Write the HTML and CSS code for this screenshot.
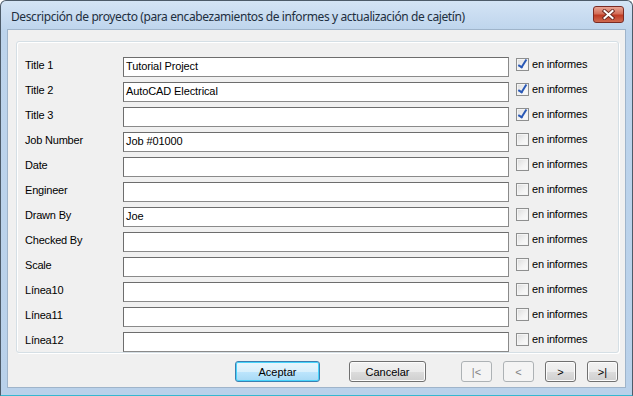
FILE: index.html
```
<html>

<head>
<meta charset="UTF-8">
<title>Descripción de proyecto</title>

<link rel="stylesheet" href="styles.css">

</head>

<body>

<div class="window">

    <div class="titlebar">
        <div class="caption">Descripción de proyecto (para encabezamientos de informes y actualización de cajetín)</div>
        <div class="close">
            <svg width="15" height="11" viewBox="0 0 15 11">
                <path d="M3.5 2 L11.5 9 M11.5 2 L3.5 9" stroke="#6a2a22" stroke-width="3.8" stroke-linecap="square"/>
                <path d="M3.5 2 L11.5 9 M11.5 2 L3.5 9" stroke="#ffffff" stroke-width="2" stroke-linecap="square"/>
            </svg>
        </div>
    </div>

    <div class="client">

        <div class="group">

            <!-- 1 -->
            <div class="label">Title 1</div>
            <div class="textbox">Tutorial Project</div>
            <div class="check"><span class="box checked"></span>en informes</div>

            <!-- 2 -->
            <div class="label">Title 2</div>
            <div class="textbox">AutoCAD Electrical</div>
            <div class="check"><span class="box checked"></span>en informes</div>

            <!-- 3 -->
            <div class="label">Title 3</div>
            <div class="textbox"></div>
            <div class="check"><span class="box checked"></span>en informes</div>

            <!-- 4 -->
            <div class="label">Job Number</div>
            <div class="textbox">Job #01000</div>
            <div class="check"><span class="box"></span>en informes</div>

            <!-- 5 -->
            <div class="label">Date</div>
            <div class="textbox"></div>
            <div class="check"><span class="box"></span>en informes</div>

            <!-- 6 -->
            <div class="label">Engineer</div>
            <div class="textbox"></div>
            <div class="check"><span class="box"></span>en informes</div>

            <!-- 7 -->
            <div class="label">Drawn By</div>
            <div class="textbox">Joe</div>
            <div class="check"><span class="box"></span>en informes</div>

            <!-- 8 -->
            <div class="label">Checked By</div>
            <div class="textbox"></div>
            <div class="check"><span class="box"></span>en informes</div>

            <!-- 9 -->
            <div class="label">Scale</div>
            <div class="textbox"></div>
            <div class="check"><span class="box"></span>en informes</div>

            <!-- 10 -->
            <div class="label">Línea10</div>
            <div class="textbox"></div>
            <div class="check"><span class="box"></span>en informes</div>

            <!-- 11 -->
            <div class="label">Línea11</div>
            <div class="textbox"></div>
            <div class="check"><span class="box"></span>en informes</div>

            <!-- 12 -->
            <div class="label">Línea12</div>
            <div class="textbox"></div>
            <div class="check"><span class="box"></span>en informes</div>

        </div>

        <div class="buttons">
            <div class="button default ok">Aceptar</div>
            <div class="button cancel">Cancelar</div>
            <div class="nav">
                <div class="button small disabled">|&lt;</div>
                <div class="button small disabled">&lt;</div>
                <div class="button small">&gt;</div>
                <div class="button small">&gt;|</div>
            </div>
        </div>

    </div>

</div>

</body>
</html>
```

FILE: styles.css
```
body {
    margin: 0;
    background: #ffffff;
}

.window {
    width: 633px;
    height: 396px;
    box-sizing: border-box;
    display: flex;
    flex-direction: column;
    border: 1px solid #4d5b69;
    border-bottom-color: #35b8d0;
    border-radius: 6px 6px 0 0;
    background: linear-gradient(#d4e4f5, #bdd4ec 30px, #b9d1ea);
    font-family: "Liberation Sans", Arial, sans-serif;
    font-size: 11px;
    color: #000;
}

.titlebar {
    height: 28px;
    display: flex;
    align-items: center;
    padding-left: 10px;
    padding-right: 8px;
}

.caption {
    flex: 1;
    font-family: "Noto Sans", sans-serif;
    font-size: 12px;
    letter-spacing: -0.4px;
    color: #1e2f40;
    margin-top: 2px;
}

.close {
    width: 31px;
    height: 17px;
    box-sizing: border-box;
    margin-top: -2px;
    border: 1px solid #7a2b24;
    border-radius: 3px;
    background: linear-gradient(#e8a493, #d36e59 45%, #bf3b24 55%, #cf6a50);
    display: flex;
    align-items: center;
    justify-content: center;
}

.client {
    flex: 1;
    margin: 0 6px 7px 6px;
    border: 1px solid #9fb4ca;
    background: #f0f0f0;
    display: flex;
    flex-direction: column;
}

.group {
    margin: 11px 6px 0 8px;
    padding: 15px 0 0 8px;
    border: 1px solid #d5dfe5;
    border-radius: 3px;
    box-shadow: inset 1px 1px 0 #ffffff, 1px 1px 0 #ffffff;
    display: grid;
    grid-template-columns: 98px 386px auto;
    grid-auto-rows: 20px;
    row-gap: 5px;
    height: 295px;
}

.label {
    display: flex;
    align-items: center;
    box-sizing: border-box;
    padding-bottom: 5px;
    letter-spacing: -0.2px;
}

.textbox {
    box-sizing: border-box;
    border: 1px solid #6d6d6d;
    border-right-color: #8a8a8a;
    border-bottom-color: #8a8a8a;
    background: #ffffff;
    padding: 0 2px;
    line-height: 17px;
    font-size: 11px;
    letter-spacing: -0.1px;
}

.check {
    display: flex;
    align-items: center;
    margin-left: 7px;
    margin-top: -6px;
    letter-spacing: -0.2px;
}

.box {
    width: 13px;
    height: 13px;
    box-sizing: border-box;
    border: 1px solid #8e8f8f;
    background: linear-gradient(135deg, #dcdcdc, #f4f4f4 60%, #fbfbfb);
    box-shadow: inset 0 0 0 1px #f4f4f4;
    margin-right: 3px;
    position: relative;
}

.box.checked::after {
    content: "";
    position: absolute;
    left: 3px;
    top: -1px;
    width: 3px;
    height: 8px;
    border: solid #2a59b6;
    border-width: 0 2px 2px 0;
    transform: rotate(32deg);
}

.buttons {
    display: flex;
    margin-top: 8px;
    padding-left: 227px;
    padding-right: 7px;
}

.button {
    height: 21px;
    box-sizing: border-box;
    border: 1px solid #707070;
    border-radius: 3px;
    background: linear-gradient(#f2f2f2, #ebebeb 50%, #dddddd 50%, #cfcfcf);
    box-shadow: inset 0 0 0 1px #fcfcfc;
    display: flex;
    align-items: center;
    justify-content: center;
}

.ok {
    width: 85px;
}

.cancel {
    width: 77px;
    margin-left: 29px;
}

.default {
    border-color: #3c7fb1;
    background: linear-gradient(#eaf6fd, #d9f0fc 50%, #bee6fd 50%, #a7d9f5);
    box-shadow: inset 0 0 0 1px #48d4fb;
}

.nav {
    margin-left: auto;
    display: flex;
    gap: 11px;
}

.small {
    width: 31px;
}

.disabled {
    border-color: #adb2b5;
    background: #f4f4f4;
    box-shadow: none;
    color: #838383;
}
```
